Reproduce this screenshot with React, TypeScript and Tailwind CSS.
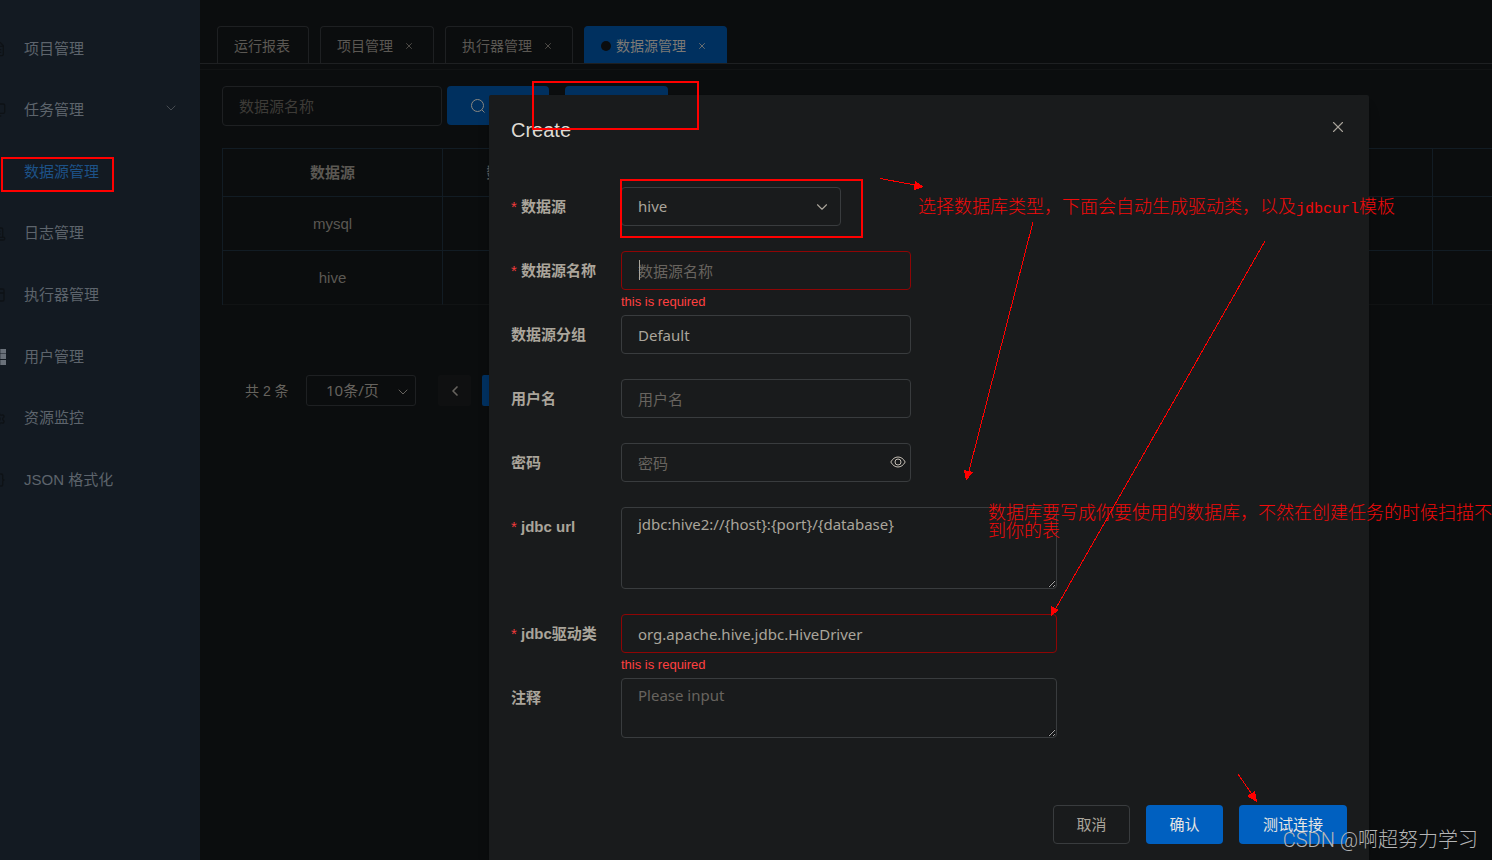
import React from 'react';
import { Braces, ChevronDown, ChevronLeft, FileText, Monitor, ScrollText, Settings, Table2, X } from 'lucide-react';

const UI_FONT = "font-['Liberation_Sans','Noto_Sans_CJK_SC',sans-serif]";
const FIELD_FONT = "font-['Noto_Sans','Noto_Sans_CJK_SC',sans-serif]";
const FIELD = `${FIELD_FONT} block w-full rounded border bg-transparent px-4 text-[15px] text-[#aaa59b] placeholder:text-[#68645f] outline-none`;

const GridIcon = () => (
  <svg viewBox="0 0 16 16" className="size-4 shrink-0 fill-[#6a717a]" aria-hidden="true">
    <path d="M0 0h5v4.500H0zM5.300 0h5.400v4.500H5.300zM11 0h5v4.500h-5zM0 5h5v5H0zM5.300 5h5.400v5H5.300zM11 5h5v5h-5zM0 11h5v5H0zM5.300 11h5.400v5H5.300zM11 11h5v5h-5z" />
  </svg>
);

const SearchIcon = () => (
  <svg viewBox="0 0 16 16" className="size-4 fill-none stroke-[#8a8781]" aria-hidden="true">
    <circle cx="7.5" cy="7.5" r="6" />
    <path d="M11.800 11.800 14.500 14.500" />
  </svg>
);

const EyeIcon = () => (
  <svg viewBox="0 0 16 16" className="size-4 fill-none stroke-[#c4beb4]" aria-hidden="true">
    <path d="M.8 8C2.600 4.700 5.100 3 8 3s5.400 1.700 7.200 5C13.400 11.300 10.900 13 8 13S2.600 11.300.8 8z" />
    <circle cx="8" cy="8" r="3" />
  </svg>
);

const iconClass = 'size-4 shrink-0 text-[#0e1216]';

const menu = [
  { label: '项目管理', icon: <FileText className={iconClass} /> },
  { label: '任务管理', icon: <Monitor className={iconClass} />, expandable: true },
  { label: '数据源管理', icon: <span className="size-4 shrink-0" />, active: true },
  { label: '日志管理', icon: <ScrollText className={iconClass} /> },
  { label: '执行器管理', icon: <Table2 className={iconClass} /> },
  { label: '用户管理', icon: <GridIcon /> },
  { label: '资源监控', icon: <Settings className={iconClass} /> },
  { label: 'JSON 格式化', icon: <Braces className={iconClass} /> },
];

const tabs = [
  { label: '运行报表', closable: false },
  { label: '项目管理', closable: true },
  { label: '执行器管理', closable: true },
  { label: '数据源管理', closable: true, active: true },
];

const Sidebar: React.FC = () => (
  <aside className="w-[200px] shrink-0 overflow-hidden bg-[#131a22] pt-[18px]">
    <nav className="-ml-[10px] grid h-[493px] grid-rows-8">
      {menu.map((item) => (
        <a
          key={item.label}
          href="#"
          className={`flex items-center gap-[18px] pr-[21px] text-[15px] ${item.active ? 'text-[#1d5288]' : 'text-[#5d646c]'}`}
        >
          {item.icon}
          <span className="flex-1">{item.label}</span>
          {item.expandable && <ChevronDown className="mb-1 size-4 text-[#464b51]" strokeWidth={1.5} />}
        </a>
      ))}
    </nav>
  </aside>
);

const TagsView: React.FC = () => (
  <div className="border-b border-[#111314] pb-[5px]">
    <div className="flex items-end gap-[11px] border-b border-[#1e2022] pt-[26px] pl-[17px]">
      {tabs.map((tab) => (
        <div
          key={tab.label}
          className={`flex h-[37px] items-center rounded-t border border-b-0 px-4 pt-0.5 text-sm whitespace-nowrap ${
            tab.active ? 'border-[#00305f] bg-[#00305f] text-[#7d7a75]' : 'border-[#1e2022] text-[#5b5853]'
          }`}
        >
          {tab.active && <span className="mr-[5px] size-[10px] rounded-full bg-[#0b0d0e]" />}
          <a href="#">{tab.label}</a>
          {tab.closable ? (
            <button type="button" aria-label={`close ${tab.label}`} className="ml-2 flex w-4 justify-center">
              <X className="size-[10px]" strokeWidth={2} />
            </button>
          ) : (
            <span className="w-0.5" />
          )}
        </div>
      ))}
    </div>
  </div>
);

const DataTable: React.FC = () => {
  const cell = 'border-r border-b border-[#121c24] p-0 pt-0.5 last:border-r-0';
  return (
    <table className="w-full table-fixed border-separate border-spacing-0 border-t border-l border-[#121c24] text-center text-[15px] text-[#5b5853]">
      <colgroup>
        <col className="w-[220px]" />
        <col className="w-[163px]" />
        <col />
        <col className="w-[59px]" />
      </colgroup>
      <thead>
        <tr className="h-12">
          <th className={cell}>数据源</th>
          <th className={cell}>数据源名称</th>
          <th className={cell} />
          <th className={cell} />
        </tr>
      </thead>
      <tbody>
        {['mysql', 'hive'].map((name) => (
          <tr key={name} className="group h-[54px]">
            <td className={`${cell} group-last:border-b-[#111314]`}>{name}</td>
            <td className={`${cell} group-last:border-b-[#111314]`} />
            <td className={`${cell} group-last:border-b-[#111314]`} />
            <td className={`${cell} group-last:border-b-[#111314]`} />
          </tr>
        ))}
      </tbody>
    </table>
  );
};

const Pagination: React.FC = () => (
  <div className="mt-[70px] flex items-center pl-[23px] text-sm text-[#66635e]">
    <span className="w-[61px]">共 2 条</span>
    <div className="relative">
      <select
        aria-label="page size"
        className={`${FIELD_FONT} h-[31px] w-[110px] appearance-none rounded-[3px] border border-[#1e2022] bg-transparent pl-[19px] text-[15px]`}
      >
        <option>10条/页</option>
      </select>
      <ChevronDown className="pointer-events-none absolute top-[9px] right-[5px] size-4" strokeWidth={1.5} />
    </div>
    <button type="button" aria-label="previous page" className="ml-[22px] flex h-[31px] w-[33px] items-center justify-center rounded-[2px] bg-[#0f1011]">
      <ChevronLeft className="size-4" strokeWidth={2.5} />
    </button>
    <button type="button" aria-label="page 1" className="ml-[11px] h-[31px] w-[33px] rounded-[2px] bg-[#00305f]" />
  </div>
);

interface FormRowProps {
  id: string;
  label: string;
  required?: boolean;
  error?: string;
  width: string;
  children: React.ReactNode;
}

const FormRow: React.FC<FormRowProps> = ({ id, label, required, error, width, children }) => (
  <div className="flex">
    <label htmlFor={id} className="flex h-[39px] w-[110px] shrink-0 items-center pt-0.5 text-[15px] font-bold text-[#aaa59b]">
      {required && <span className="w-[10px] font-normal text-[#f23c3c]">*</span>}
      {label}
    </label>
    <div className={width}>
      <div className="relative">{children}</div>
      <p className="h-[25px] text-[13px] leading-[23px] text-[#ff4040]">{error}</p>
    </div>
  </div>
);

const CreateDialog: React.FC = () => (
  <div className="absolute inset-0 flex justify-end pt-[95px] pr-[123px]">
    <section role="dialog" aria-label="Create" className="w-[880px] rounded-t-[2px] bg-[#191b1c] px-[22px] shadow-lg">
      <header className="flex h-[70px] items-center justify-between">
        <h2 className="text-xl text-[#dedad3]">Create</h2>
        <button type="button" aria-label="close" className="mb-[6px] text-[#a8a39a]">
          <X className="size-[18px]" strokeWidth={1.5} />
        </button>
      </header>
      <form className="pt-[22px]">
        <FormRow id="datasource" label="数据源" required width="w-[220px]">
          <select id="datasource" className={`${FIELD} h-[39px] appearance-none border-[#393c3e]`}>
            <option>hive</option>
          </select>
          <ChevronDown className="pointer-events-none absolute top-[11px] right-[10px] size-[18px] text-[#aaa59b]" strokeWidth={1.5} />
        </FormRow>
        <FormRow id="name" label="数据源名称" required error="this is required" width="w-[290px]">
          <input id="name" placeholder="数据源名称" className={`${FIELD} h-[39px] border-[#8f0505]`} />
          <span className="absolute top-[9px] left-[18px] h-5 w-px bg-[#aaa59b]" />
        </FormRow>
        <FormRow id="group" label="数据源分组" width="w-[290px]">
          <input id="group" defaultValue="Default" className={`${FIELD} h-[39px] border-[#393c3e]`} />
        </FormRow>
        <FormRow id="user" label="用户名" width="w-[290px]">
          <input id="user" placeholder="用户名" className={`${FIELD} h-[39px] border-[#393c3e]`} />
        </FormRow>
        <FormRow id="password" label="密码" width="w-[290px]">
          <input id="password" type="password" placeholder="密码" className={`${FIELD} h-[39px] border-[#393c3e]`} />
          <button type="button" aria-label="show password" className="absolute top-[11px] right-[5px]">
            <EyeIcon />
          </button>
        </FormRow>
        <FormRow id="url" label="jdbc url" required width="w-[436px]">
          <textarea
            id="url"
            defaultValue="jdbc:hive2://{host}:{port}/{database}"
            className={`${FIELD} h-[82px] border-[#393c3e] pt-1 leading-6`}
          />
        </FormRow>
        <FormRow id="driver" label="jdbc驱动类" required error="this is required" width="w-[436px]">
          <input id="driver" defaultValue="org.apache.hive.jdbc.HiveDriver" className={`${FIELD} h-[39px] border-[#8f0505]`} />
        </FormRow>
        <FormRow id="comments" label="注释" width="w-[436px]">
          <textarea id="comments" placeholder="Please input" className={`${FIELD} h-[60px] border-[#393c3e] pt-1 leading-6`} />
        </FormRow>
        <div className="mt-[42px] flex justify-end gap-4 text-[15px]">
          <button type="button" className="h-[39px] w-[77px] rounded border border-[#393c3e] pt-0.5 text-[#aaa59b]">取消</button>
          <button type="button" className="h-[39px] w-[77px] rounded bg-[#0060c0] pt-0.5 text-[#e8e6e3]">确认</button>
          <button type="button" className="h-[39px] w-[108px] rounded bg-[#0060c0] pt-0.5 text-[#e8e6e3]">测试连接</button>
        </div>
      </form>
    </section>
  </div>
);

// Red marks and notes drawn over the whole page
const Annotations: React.FC = () => (
  <div className="pointer-events-none absolute inset-0 overflow-hidden font-['Noto_Sans_CJK_SC',sans-serif]">
    <svg className="absolute top-0 left-0" width="1492" height="860" shapeRendering="crispEdges" aria-hidden="true">
      <g fill="none" stroke="#ff0000" strokeWidth="2">
        <rect x="2" y="158" width="111" height="33" />
        <rect x="533" y="82" width="165" height="47" />
        <rect x="621" y="180" width="241" height="57" />
      </g>
      <g stroke="#ff0000" fill="#ff0000" strokeWidth="1">
        <path d="M880 178.500 915 185M1033 222 969 471M1265 241 1056 608M1238 774 1251 793" />
        <path stroke="none" d="M924 187 914 190 915 181zM966 481 964 470 973 472zM1051 616 1051 606 1059 610zM1257 802 1247 796 1255 791z" />
      </g>
    </svg>
    <p className="absolute top-[196px] left-[918px] text-lg leading-[18px] font-light whitespace-nowrap text-[#f20a0a]">
      选择数据库类型，下面会自动生成驱动类，以及<span className="font-['Liberation_Mono',monospace] text-[15px]">jdbcurl</span>模板
    </p>
    <p className="absolute top-[502px] left-[988px] w-[504px] text-lg leading-[18px] font-light break-all text-[#f20a0a]">
      数据库要写成你要使用的数据库，不然在创建任务的时候扫描不到你的表
    </p>
    <p className="absolute right-[14px] bottom-[6px] font-['Liberation_Sans_Narrow','Roboto','Noto_Sans_CJK_SC',sans-serif] text-xl font-light text-[#b4b5b6]">
      CSDN @啊超努力学习
    </p>
  </div>
);

const App: React.FC = () => (
  <div className={`${UI_FONT} relative flex min-h-screen overflow-hidden bg-[#0b0d0e] scheme-dark`}>
    <Sidebar />
    <main className="min-w-0 flex-1">
      <TagsView />
      <div className="pt-4 pl-[22px]">
        <div className="flex">
          <input
            aria-label="数据源名称"
            placeholder="数据源名称"
            className={`${FIELD_FONT} h-10 w-[220px] rounded border border-[#1e2022] bg-transparent px-4 text-[15px] placeholder:text-[#3d3b37]`}
          />
          <button type="button" aria-label="search" className="ml-[5px] h-[39px] w-[102px] rounded bg-[#00305f] pl-[23px]">
            <SearchIcon />
          </button>
          <button type="button" aria-label="add" className="ml-4 h-[39px] w-[103px] rounded bg-[#00305f]" />
        </div>
        <div className="pt-[22px]">
          <DataTable />
          <Pagination />
        </div>
      </div>
    </main>
    <CreateDialog />
    <Annotations />
  </div>
);

export default App;
